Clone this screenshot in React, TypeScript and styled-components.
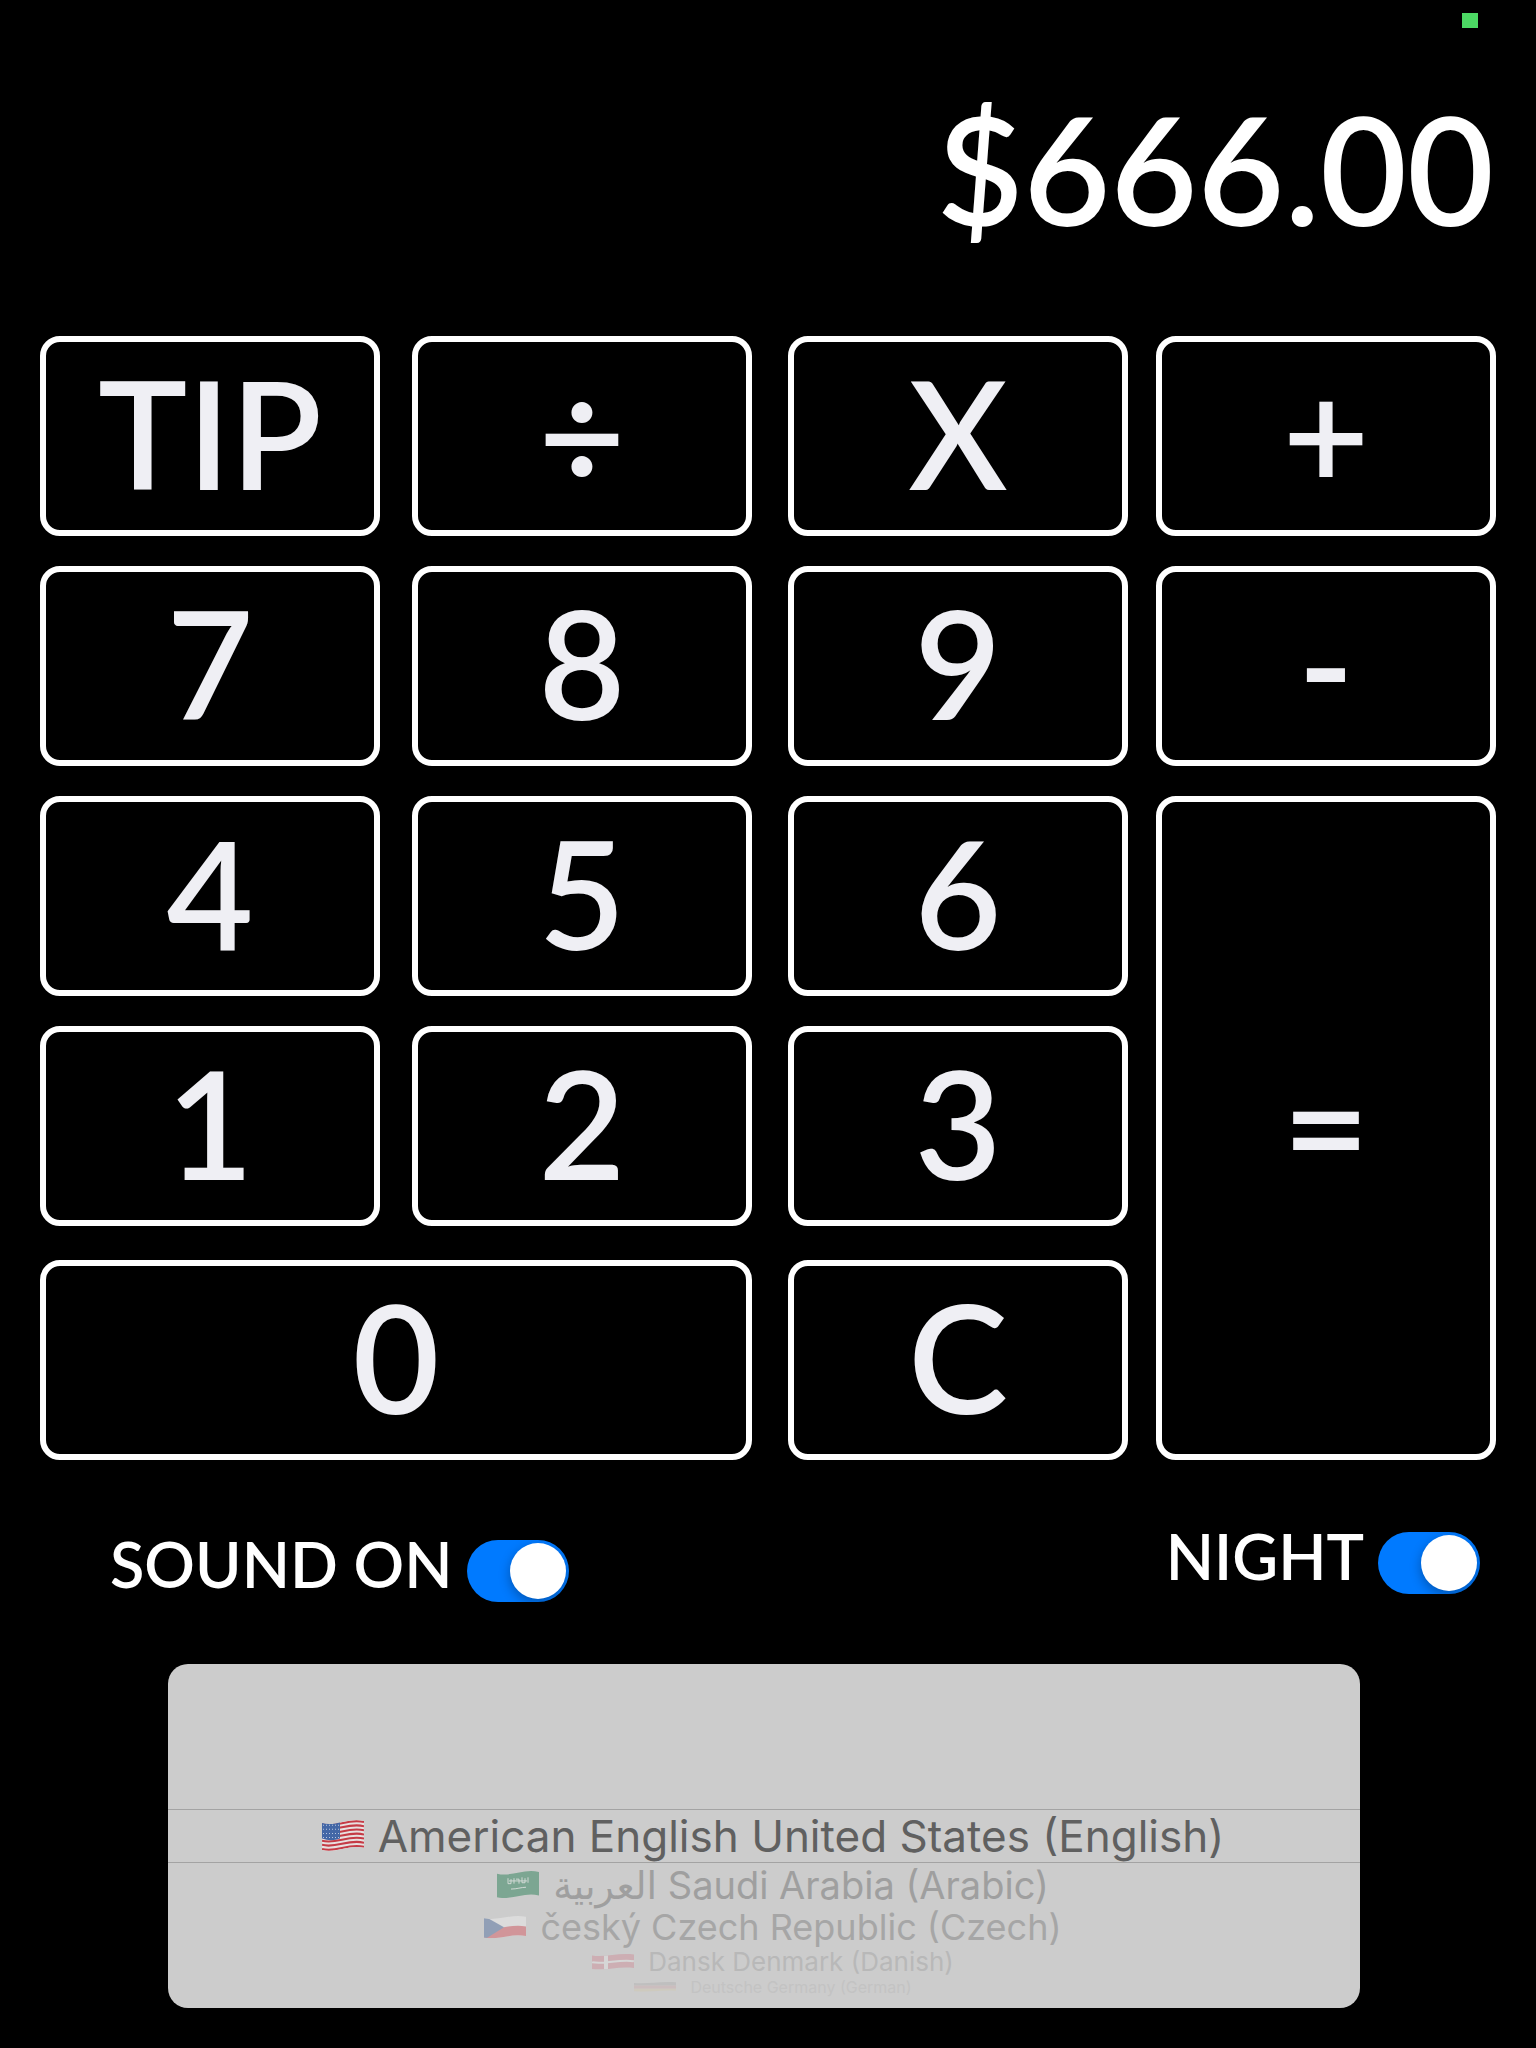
import React, { useState } from "react";
import styled, { createGlobalStyle } from "styled-components";

const GlobalStyle = createGlobalStyle`
  *, *::before, *::after { box-sizing: border-box; }
  body {
    margin: 0;
    background: #000;
    color: #fff;
    font-family: Lato, "Liberation Sans", sans-serif;
  }
`;

const Page = styled.main`
  display: flex;
  flex-direction: column;
  padding: 0 40px 40px;
`;

const StatusBar = styled.header`
  display: flex;
  justify-content: flex-end;
  height: 48px;
  padding: 13px 18px 0 0;
`;

const CameraLight = styled.span`
  width: 16px;
  height: 15px;
  background: #4cd964;
`;

const Display = styled.output`
  display: block;
  height: 240px;
  padding-right: 2px;
  line-height: 240px;
  font-size: 150px;
  font-weight: 600;
  text-align: right;
`;

const Keypad = styled.div`
  display: grid;
  grid-template-columns: 1fr 32px 1fr 36px 1fr 28px 1fr;
  grid-template-rows: 200px 30px 200px 30px 200px 30px 200px 34px 200px;
  margin-top: 48px;
`;

const Key = styled.button<{ $column: string; $row: string }>`
  grid-column: ${(p) => p.$column};
  grid-row: ${(p) => p.$row};
  min-width: 0;
  padding: 0 0 8px;
  border: 6px solid #fff;
  border-radius: 20px;
  background: #000;
  color: #efeff4;
  font-family: inherit;
  font-size: 150px;
  font-weight: 600;
  line-height: 180px;
  cursor: pointer;
`;

const Settings = styled.div`
  display: flex;
  justify-content: space-between;
  align-items: flex-start;
  margin-top: 72px;
  padding: 0 16px 0 70px;
`;

const Setting = styled.label<{ $drop?: number }>`
  display: flex;
  align-items: center;
  gap: 14px;
  margin-top: ${(p) => p.$drop ?? 0}px;
`;

const SettingName = styled.span`
  padding-bottom: 14px;
  font-size: 63px;
  font-weight: 600;
  line-height: 48px;
`;

const Switch = styled.input`
  appearance: none;
  width: 102px;
  height: 62px;
  margin: 0;
  padding: 3px;
  border-radius: 31px;
  background: #39393d;
  overflow: hidden;
  display: flex;
  justify-content: flex-start;
  cursor: pointer;

  &::before {
    content: "";
    width: 56px;
    height: 56px;
    border-radius: 50%;
    background: #fff;
    box-shadow: 0 4px 12px rgba(0, 0, 0, 0.3);
  }

  &:checked {
    background: #007aff;
    justify-content: flex-end;
  }
`;

const Picker = styled.fieldset`
  min-width: 0;
  height: 344px;
  margin: 62px 136px 0 128px;
  padding: 145px 0 0;
  border: 0;
  border-radius: 20px;
  background: #ccc;
  overflow: hidden;
`;

const Language = styled.label<{
  $size: number;
  $height: number;
  $color: string;
  $selected?: boolean;
}>`
  display: flex;
  align-items: center;
  justify-content: center;
  gap: 14px;
  height: ${(p) => p.$height}px;
  padding-left: 18px;
  border: solid #a3a3a3;
  border-width: ${(p) => (p.$selected ? "1px 0" : "0")};
  color: ${(p) => p.$color};
  font-family: Inter, "Liberation Sans", "DejaVu Sans", sans-serif;
  font-size: ${(p) => p.$size}px;
  line-height: ${(p) => p.$height}px;
  white-space: nowrap;
`;

const HiddenRadio = styled.input`
  appearance: none;
  position: absolute;
  margin: 0;
  opacity: 0;
`;

const FlagArt = styled.svg<{ $height: number; $opacity: number }>`
  flex: none;
  width: 42px;
  height: ${(p) => p.$height}px;
  opacity: ${(p) => p.$opacity};
`;

const WAVE = "M0 3 C14 7 26 -3 42 1 V27 C26 23 14 33 0 29 Z";

function FlagShape({ code }: { code: string }) {
  const clip = `flag-${code}`;
  return (
    <>
      <defs>
        <clipPath id={clip}>
          <path d={WAVE} />
        </clipPath>
      </defs>
      <g clipPath={`url(#${clip})`}>
        {code === "us" && (
          <>
            <rect width="42" height="32" fill="#e9e2e2" />
            {[0, 1, 2, 3, 4, 5, 6].map((i) => (
              <path
                key={i}
                d={`M0 ${4 + i * 4} C14 ${8 + i * 4} 26 ${-2 + i * 4} 42 ${2 + i * 4}`}
                fill="none"
                stroke="#c5343f"
                strokeWidth="2"
              />
            ))}
            <path d="M0 0 H18 V18 C12 20 6 20 0 18 Z" fill="#3c62a5" />
            {[5, 9, 13, 17].map((y) => (
              <path
                key={y}
                d={`M1 ${y} H18`}
                stroke="#b9c7df"
                strokeWidth="1"
                strokeDasharray="1 2"
              />
            ))}
          </>
        )}
        {code === "sa" && (
          <>
            <rect width="42" height="32" fill="#1d7a4c" />
            <path
              d="M11 8 V14 H14 V9 M17 8 V14 M19 9 H22 V14 M25 7 V13 H28 V8 M31 7 V13 M12 11 H30"
              fill="none"
              stroke="#dfeee6"
              strokeWidth="1"
            />
            <path d="M14 20 C20 20 24 18 29 18" fill="none" stroke="#dfeee6" strokeWidth="1" />
          </>
        )}
        {code === "cz" && (
          <>
            <rect width="42" height="32" fill="#f4f4f4" />
            <path d="M0 16 C14 20 26 10 42 14 V32 H0 Z" fill="#d9444e" />
            <path d="M0 0 L20 15 L0 32 Z" fill="#3b5e96" />
          </>
        )}
        {code === "dk" && (
          <>
            <rect width="42" height="32" fill="#d0566a" />
            <path
              d="M0 16 C14 20 26 10 42 14 M14 0 V32"
              fill="none"
              stroke="#f4f4f4"
              strokeWidth="4"
            />
          </>
        )}
        {code === "de" && (
          <>
            <rect width="42" height="11" fill="#555" />
            <rect y="11" width="42" height="10" fill="#c9434a" />
            <rect y="21" width="42" height="11" fill="#e6c14d" />
          </>
        )}
      </g>
    </>
  );
}

const KEYS = [
  { text: "TIP", column: "1", row: "1" },
  { text: "÷", column: "3", row: "1" },
  { text: "X", column: "5", row: "1" },
  { text: "+", column: "7", row: "1" },
  { text: "7", column: "1", row: "3" },
  { text: "8", column: "3", row: "3" },
  { text: "9", column: "5", row: "3" },
  { text: "-", column: "7", row: "3" },
  { text: "4", column: "1", row: "5" },
  { text: "5", column: "3", row: "5" },
  { text: "6", column: "5", row: "5" },
  { text: "=", column: "7", row: "5 / 10" },
  { text: "1", column: "1", row: "7" },
  { text: "2", column: "3", row: "7" },
  { text: "3", column: "5", row: "7" },
  { text: "0", column: "1 / 4", row: "9" },
  { text: "C", column: "5", row: "9" },
];

const LANGUAGES = [
  { code: "us", name: "American English United States (English)", size: 44, height: 54, color: "#606060", flag: 32, opacity: 0.95 },
  { code: "sa", name: "العربية Saudi Arabia (Arabic)", size: 38, height: 44, color: "#9f9f9f", flag: 28, opacity: 0.45 },
  { code: "cz", name: "český Czech Republic (Czech)", size: 36, height: 40, color: "#a6a6a6", flag: 23, opacity: 0.4 },
  { code: "dk", name: "Dansk Denmark (Danish)", size: 26, height: 30, color: "#b8b8b8", flag: 16, opacity: 0.25 },
  { code: "de", name: "Deutsche Germany (German)", size: 16, height: 20, color: "#c3c3c3", flag: 10, opacity: 0.1 },
];

export default function App() {
  const [sound, setSound] = useState(true);
  const [night, setNight] = useState(true);

  return (
    <>
      <GlobalStyle />
      <Page>
        <StatusBar>
          <CameraLight />
        </StatusBar>
        <Display>$666.00</Display>
        <Keypad>
          {KEYS.map((key) => (
            <Key key={key.text} type="button" $column={key.column} $row={key.row}>
              {key.text}
            </Key>
          ))}
        </Keypad>
        <Settings>
          <Setting $drop={8}>
            <SettingName>SOUND ON</SettingName>
            <Switch
              type="checkbox"
              role="switch"
              checked={sound}
              onChange={(e) => setSound(e.target.checked)}
            />
          </Setting>
          <Setting>
            <SettingName>NIGHT</SettingName>
            <Switch
              type="checkbox"
              role="switch"
              checked={night}
              onChange={(e) => setNight(e.target.checked)}
            />
          </Setting>
        </Settings>
        <Picker>
          {LANGUAGES.map((language, index) => (
            <Language
              key={language.code}
              $size={language.size}
              $height={language.height}
              $color={language.color}
              $selected={index === 0}
            >
              <HiddenRadio
                type="radio"
                name="language"
                value={language.code}
                defaultChecked={index === 0}
              />
              <FlagArt
                viewBox="0 0 42 31"
                preserveAspectRatio="none"
                aria-hidden="true"
                $height={language.flag}
                $opacity={language.opacity}
              >
                <FlagShape code={language.code} />
              </FlagArt>
              <span>{language.name}</span>
            </Language>
          ))}
        </Picker>
      </Page>
    </>
  );
}
